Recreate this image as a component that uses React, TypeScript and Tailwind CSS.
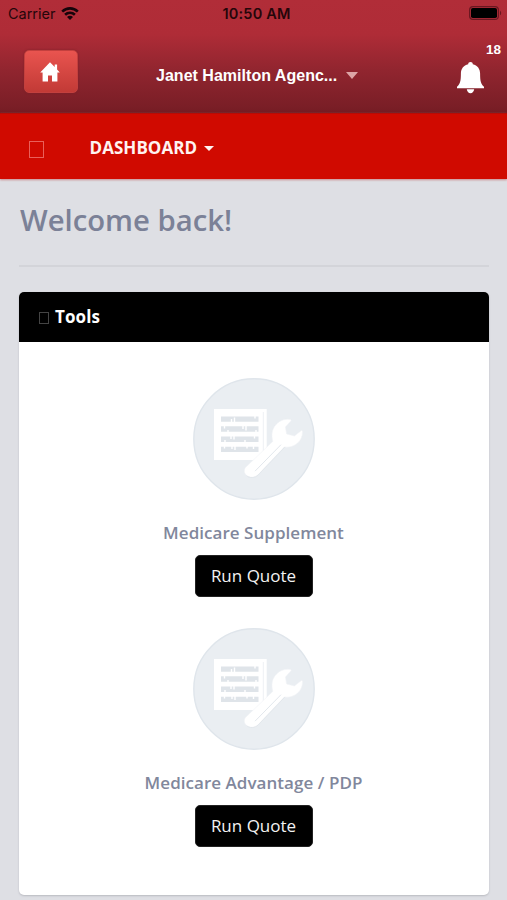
import React from "react";

function StatusBar() {
  return (
    <div className="flex h-7 items-center justify-between pl-2 pr-[5px] font-['Inter',sans-serif] text-[14.5px] text-[#25060a]">
      <div className="flex w-[120px] items-center gap-[6px]">
        <span className="leading-7 tracking-[-0.02px]">Carrier</span>
        <svg className="-mt-[2px]" width="18" height="13" viewBox="0 0 18 13" fill="none" stroke="#16040a" strokeWidth="2.6">
          <path d="M1.2 4.7C5.6.3 12.4.3 16.8 4.7" />
          <path d="M4.1 7.8c2.8-2.7 7-2.7 9.8 0" />
          <path d="M6 9.9c1.7-1.6 4.3-1.6 6 0l-3 3z" fill="#16040a" stroke="none" />
        </svg>
      </div>
      <span className="pl-[3px] font-semibold tracking-[0.2px]">10:50 AM</span>
      <div className="flex w-[120px] -translate-y-px justify-end">
        <svg width="33" height="14" viewBox="0 0 33 14">
          <rect x=".6" y=".6" width="28.8" height="12.8" rx="3.5" fill="none" stroke="#6b1720" strokeWidth="1.2" />
          <rect x="2" y="2" width="26" height="10" rx="1.8" fill="#000" />
          <path d="M31 4.7c1.6.7 1.6 3.9 0 4.6z" fill="#6b1720" />
        </svg>
      </div>
    </div>
  );
}

function Header() {
  return (
    <header className="h-[113px] bg-[linear-gradient(to_bottom,#b12d38_0px,#af2c37_34px,#91252f_70px,#791e26_108px,#741b22_113px)]">
      <StatusBar />
      <div className="flex h-[85px] items-start pl-6 text-white">
        <button className="mt-[22px] flex h-[43px] w-[54px] items-center justify-center rounded-[5px] border border-[#c3403e] bg-linear-to-b from-[#e9544f] to-[#c23a36] pr-[2px] shadow-[0_0_2px_#7d2028]">
          <svg width="20" height="20" viewBox="0 0 20 20" fill="#fff">
            <path d="M10 .3.2 10.4h2.4v9.1H8v-6h4v6h5.4v-9.1h2.4l-2.7-2.9V2.4h-2.4v2.7z" />
          </svg>
        </button>
        <div className="ml-[78px] mt-[36px] flex w-[202px] items-center justify-between font-['Liberation_Sans',Arial,sans-serif] text-[16px] leading-6 font-bold">
          <span className="whitespace-nowrap tracking-[0.02px]">Janet Hamilton Agenc...</span>
          <svg className="-mt-px" width="12" height="7" viewBox="0 0 12 7" fill="#dda5a6">
            <path d="M0 0h12L6 7z" />
          </svg>
        </div>
        <div className="relative ml-[99px] mt-[34px] h-[32px] w-[27px]">
          <svg width="27" height="32" viewBox="0 0 27 32" fill="#fff">
            <path d="M13.5 0c1.4 0 2.3.9 2.3 2.2 4.7 1.2 7.3 4.7 7.3 9.3 0 7.5.7 10.2 3.9 13.3v1.4H0v-1.4c3.2-3.1 3.9-5.8 3.9-13.3 0-4.6 2.6-8.1 7.3-9.3C11.2.9 12.1 0 13.5 0z" />
            <path d="M9.8 27.3h7.4c-.3 2.4-1.6 3.9-3.7 3.9s-3.4-1.5-3.7-3.9z" />
          </svg>
          <span className="absolute -top-[20px] left-[29px] font-['Liberation_Sans',Arial,sans-serif] text-[13.5px] leading-4 font-bold">18</span>
        </div>
      </div>
    </header>
  );
}

function NavBar() {
  return (
    <nav className="flex h-[66px] items-center border-t border-[#b80b05] bg-[#d00a00] pt-[3px] pl-[29px] text-[#fff3f1] shadow-[0_1px_2px_#c98a8d]">
      <span className="mt-[3px] h-[17px] w-[15px] border border-[#e9605a]" />
      <span className="ml-[45.5px] text-[17px] leading-6 font-bold tracking-[0.05px]">DASHBOARD</span>
      <svg className="ml-[7px] mt-px" width="10" height="5" viewBox="0 0 10 5" fill="#fff3f1">
        <path d="M0 0h10L5 5z" />
      </svg>
    </nav>
  );
}

function ToolsBadge() {
  return (
    <svg width="122" height="122" viewBox="0 0 122 122" fill="none">
      <circle cx="61" cy="61" r="60.2" fill="#eaeef2" stroke="#dfe5eb" strokeWidth="1.4" />
      <path d="M21 31h52.7v51H21z" fill="#fff" />
      <path d="M70.3 34v46" stroke="#eef1f4" strokeWidth="1" />
      <g fill="#dfe4e9">
        <path d="M28 38.5h37.5v5.2H28z" />
        <path d="M28 48.3h37.5v5.4H28z" />
        <path d="M28 58.5h37.5v5.4H28z" />
        <path d="M28 68.7h37.5v5.4H28z" />
      </g>
      <g stroke="#fff" strokeWidth="1.4">
        <path d="M38.5 41v3M41.5 39.5v4.5M62 38v2.5" />
        <path d="M31.5 48v2.5M35 52v2.5M50 48v3M53 48v4.5M63 52v2" />
        <path d="M38 58v3M41 58v3.5M61.5 58v2.5M32 62v2M52 62v2.5" />
        <path d="M31.5 68v2.5M39 68v3M42 68v4M54 68v2.5M60.5 68v3" />
      </g>
      <path
        d="M52.8 89.2 79.8 63.4c-1.8-6.8-.8-12.8 3.8-17.4 3.7-3.7 8.4-5.4 13.8-4.5.9.2 1 .9.4 1.5l-5.4 6 1.2 7 7.8 2 6.7-5.2c.8-.5 1.4-.1 1.4.8.2 9.6-8 16.6-18.2 15.4L64.9 96.9c-3.4 3.1-8.8 3.1-11.8.2-2.2-2.2-2.4-5.8-.3-7.9z"
        fill="#fff"
        stroke="#f1f4f7"
        strokeWidth=".6"
      />
      <path d="M53.5 97.7c3.2 2.7 8.3 2.4 11.6-.6l26.6-27.9" stroke="#dfe5ea" strokeWidth=".8" />
      <path d="m62 93.2 26-26.5" stroke="#dfe4ea" strokeWidth=".9" />
    </svg>
  );
}

function Tool({ name }: { name: string }) {
  return (
    <div className="flex h-[249.5px] flex-col items-center">
      <ToolsBadge />
      <h3 className="mt-[21px] text-[17px] leading-6 font-semibold tracking-[0.04px] text-[#81879c]">{name}</h3>
      <button className="mt-[10px] h-[42px] w-[118px] rounded-[5px] border border-[#222] bg-black text-[17px] leading-6 text-[#f2f2f2]">
        Run Quote
      </button>
    </div>
  );
}

export default function App() {
  return (
    <div className="h-[900px] w-full overflow-hidden bg-[#dedfe4] font-['Open_Sans',sans-serif]">
      <Header />
      <NavBar />
      <main className="pr-[18px] pl-[19px]">
        <h1 className="h-[88px] border-b-2 border-[#d3d4d9] pt-[21px] pl-px text-[29.3px] leading-10 font-semibold tracking-[-0.02px] text-[#7b8197]">
          Welcome back!
        </h1>
        <section className="mt-[25px] h-[603px] overflow-hidden rounded-[5px] bg-white shadow-[0_1px_2px_#b9bac0]">
          <h2 className="flex h-[50px] items-center bg-black pl-5 text-white">
            <span className="mt-px h-[12px] w-[10px] border border-[#444]" />
            <span className="ml-[6px] text-[17px] leading-6 font-bold tracking-[0.1px]">Tools</span>
          </h2>
          <div className="pt-[36px] pr-px">
            <Tool name="Medicare Supplement" />
            <Tool name="Medicare Advantage / PDP" />
          </div>
        </section>
      </main>
    </div>
  );
}
